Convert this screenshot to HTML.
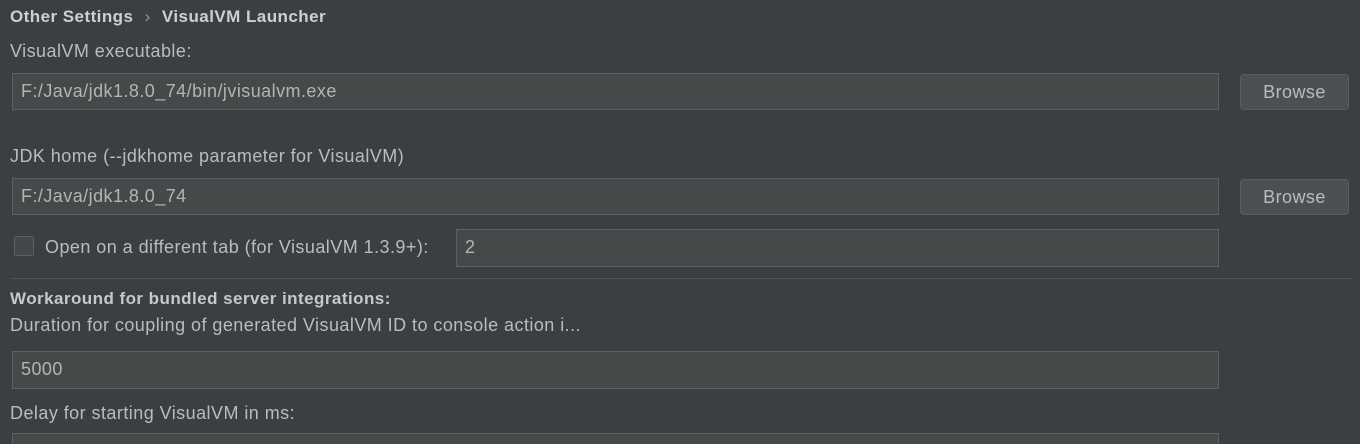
<!DOCTYPE html>
<html><head><meta charset="utf-8"><style>
html,body{margin:0;padding:0;width:1360px;height:444px;overflow:hidden;}
body{background:#3c3f41;position:relative;font-family:"Liberation Sans","DejaVu Sans",sans-serif;color:#bbbbbb;font-size:18px;letter-spacing:0.45px;}
.a{position:absolute;white-space:nowrap;line-height:20px;}
.f{position:absolute;background:#45494a;border:1px solid #5e6163;box-sizing:border-box;color:#b4b4b4;font-size:18px;line-height:35px;padding-left:8px;}
.b{position:absolute;background:#4c5052;border:1px solid #5a5e60;border-radius:4px;box-sizing:border-box;color:#bbbbbb;text-align:center;line-height:34px;font-size:18px;}
</style></head><body>
<div class="a" style="left:10px;top:7px;font-weight:bold;color:#cfcfcf;font-size:17px;">Other Settings <span style="font-weight:normal;color:#999;margin:0 6px;">›</span> VisualVM Launcher</div>
<div class="a" style="left:10px;top:41px;">VisualVM executable:</div>
<div class="f" style="left:12px;top:73px;width:1207px;height:37px;">F:/Java/jdk1.8.0_74/bin/jvisualvm.exe</div>
<div class="b" style="left:1240px;top:74px;width:109px;height:36px;">Browse</div>
<div class="a" style="left:10px;top:146px;">JDK home (--jdkhome parameter for VisualVM)</div>
<div class="f" style="left:12px;top:178px;width:1207px;height:37px;">F:/Java/jdk1.8.0_74</div>
<div class="b" style="left:1240px;top:179px;width:109px;height:36px;">Browse</div>
<div class="a" style="left:14px;top:236px;width:20px;height:20px;border:1px solid #5e6163;background:#43494a;border-radius:3px;box-sizing:border-box;"></div>
<div class="a" style="left:45px;top:237px;">Open on a different tab (for VisualVM 1.3.9+):</div>
<div class="f" style="left:456px;top:229px;width:763px;height:38px;">2</div>
<div class="a" style="left:10px;top:278px;width:1342px;height:1px;background:#4e5254;"></div>
<div class="a" style="left:10px;top:289px;font-weight:bold;color:#c8c8c8;font-size:17px;">Workaround for bundled server integrations:</div>
<div class="a" style="left:10px;top:315px;">Duration for coupling of generated VisualVM ID to console action i...</div>
<div class="f" style="left:12px;top:351px;width:1207px;height:38px;">5000</div>
<div class="a" style="left:10px;top:403px;">Delay for starting VisualVM in ms:</div>
<div class="f" style="left:12px;top:433px;width:1207px;height:11px;border-bottom:none;"></div>
</body></html>
